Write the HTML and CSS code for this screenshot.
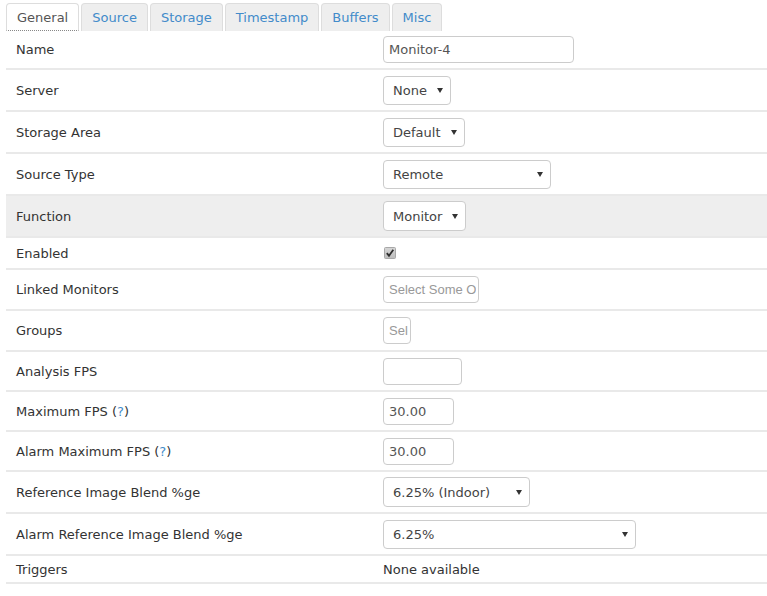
FILE: index.html
```html
<!DOCTYPE html>
<html>
<head>
<meta charset="utf-8">
<title>Monitor-4</title>
<link rel="stylesheet" href="styles.css">
</head>
<body>
<div class="page">
  <ul class="tabs">
    <li class="tab active">General</li>
    <li class="tab">Source</li>
    <li class="tab">Storage</li>
    <li class="tab">Timestamp</li>
    <li class="tab">Buffers</li>
    <li class="tab">Misc</li>
  </ul>
  <div class="form">
    <div class="row h39">
      <div class="label">Name</div>
      <div class="value"><input class="input w191" type="text" value="Monitor-4"></div>
    </div>
    <div class="row h42">
      <div class="label">Server</div>
      <div class="value"><div class="select w68"><span>None</span><svg class="arrow" width="6" height="5" viewBox="0 0 6 5"><path d="M0 0H6L3 5Z"/></svg></div></div>
    </div>
    <div class="row h42">
      <div class="label">Storage Area</div>
      <div class="value"><div class="select w82"><span>Default</span><svg class="arrow" width="6" height="5" viewBox="0 0 6 5"><path d="M0 0H6L3 5Z"/></svg></div></div>
    </div>
    <div class="row h42">
      <div class="label">Source Type</div>
      <div class="value"><div class="select w168"><span>Remote</span><svg class="arrow" width="6" height="5" viewBox="0 0 6 5"><path d="M0 0H6L3 5Z"/></svg></div></div>
    </div>
    <div class="row h42 highlight">
      <div class="label">Function</div>
      <div class="value"><div class="select w83 tall"><span>Monitor</span><svg class="arrow" width="6" height="5" viewBox="0 0 6 5"><path d="M0 0H6L3 5Z"/></svg></div></div>
    </div>
    <div class="row h32">
      <div class="label">Enabled</div>
      <div class="value">
        <svg class="check" width="12" height="12" viewBox="0 0 12 12">
          <defs><linearGradient id="cb" x1="0" y1="0" x2="0" y2="1"><stop offset="0" stop-color="#d6d6d6"/><stop offset="1" stop-color="#bdbdbd"/></linearGradient></defs>
          <rect x="0.5" y="0.5" width="11" height="11" rx="1" fill="url(#cb)" stroke="#a8a8a8"/>
          <path d="M2.8 6.2L5 8.7L9.3 2.8" fill="none" stroke="#2e2e2e" stroke-width="1.8"/>
        </svg>
      </div>
    </div>
    <div class="row h41">
      <div class="label">Linked Monitors</div>
      <div class="value"><div class="chosen w96"><span class="ph">Select Some Options</span></div></div>
    </div>
    <div class="row h41">
      <div class="label">Groups</div>
      <div class="value"><div class="chosen w28"><span class="ph">Select Some Options</span></div></div>
    </div>
    <div class="row h40">
      <div class="label">Analysis FPS</div>
      <div class="value"><input class="input w79" type="text" value=""></div>
    </div>
    <div class="row h40">
      <div class="label">Maximum FPS <span class="help">(<a>?</a>)</span></div>
      <div class="value"><input class="input w71" type="text" value="30.00"></div>
    </div>
    <div class="row h40">
      <div class="label">Alarm Maximum FPS <span class="help">(<a>?</a>)</span></div>
      <div class="value"><input class="input w71" type="text" value="30.00"></div>
    </div>
    <div class="row h42">
      <div class="label">Reference Image Blend %ge</div>
      <div class="value"><div class="select w147 tall"><span>6.25% (Indoor)</span><svg class="arrow" width="6" height="5" viewBox="0 0 6 5"><path d="M0 0H6L3 5Z"/></svg></div></div>
    </div>
    <div class="row h42">
      <div class="label">Alarm Reference Image Blend %ge</div>
      <div class="value"><div class="select w253"><span>6.25%</span><svg class="arrow" width="6" height="5" viewBox="0 0 6 5"><path d="M0 0H6L3 5Z"/></svg></div></div>
    </div>
    <div class="row h28">
      <div class="label">Triggers</div>
      <div class="value">None available</div>
    </div>
  </div>
</div>
</body>
</html>
```

FILE: styles.css
```css
html, body {
  margin: 0;
  padding: 0;
  background: #fff;
}
body {
  font-family: "DejaVu Sans", Verdana, sans-serif;
  font-size: 13px;
  color: #333;
}
.page {
  padding: 3px 0 0 6px;
}
.tabs {
  display: flex;
  gap: 2px;
  list-style: none;
  margin: 0;
  padding: 0;
}
.tab {
  box-sizing: border-box;
  height: 28px;
  display: flex;
  align-items: center;
  padding: 0 10px;
  border: 1px solid #ddd;
  border-bottom: none;
  border-radius: 4px 4px 0 0;
  background: #eee;
  color: #428bca;
}
.tab.active {
  background: #fff;
  color: #555;
  border-bottom: 1px dotted #888;
}
.form {
  display: flex;
  flex-direction: column;
}
.row {
  box-sizing: border-box;
  display: flex;
  align-items: center;
  border-bottom: 2px solid #e9e9e9;
}
.row.highlight {
  background: #eee;
}
.h28 { height: 28px; }
.h32 { height: 32px; }
.h39 { height: 39px; }
.h40 { height: 40px; }
.h41 { height: 41px; }
.h42 { height: 42px; }
.label {
  flex: none;
  box-sizing: border-box;
  width: 377px;
  padding-left: 10px;
}
.value {
  display: flex;
  align-items: center;
  color: #333;
}
.help a {
  color: #428bca;
}
.input {
  box-sizing: border-box;
  height: 27px;
  margin: 0;
  padding: 0 5px;
  border: 1px solid #ccc;
  border-radius: 4px;
  font-family: "DejaVu Sans", Verdana, sans-serif;
  font-size: 13px;
  color: #555;
  background: #fff;
  outline: none;
}
.select {
  box-sizing: border-box;
  height: 29px;
  display: flex;
  align-items: center;
  justify-content: space-between;
  padding: 0 7px 0 9px;
  border: 1px solid #ccc;
  border-radius: 4px;
  background: #fff;
  color: #444;
}
.select.tall {
  height: 30px;
}
.arrow {
  flex: none;
  fill: #333;
}
.chosen {
  box-sizing: border-box;
  height: 27px;
  display: flex;
  align-items: center;
  padding: 0 2px 0 5px;
  border: 1px solid #ccc;
  border-radius: 4px;
  background: #fff;
  font-family: "Liberation Sans", Arial, sans-serif;
  font-size: 13px;
  color: #999;
}
.ph {
  display: block;
  min-width: 0;
  flex: 1;
  white-space: nowrap;
  overflow: hidden;
}
.check {
  display: block;
  margin-left: 1px;
}
.w28 { width: 28px; }
.w68 { width: 68px; }
.w71 { width: 71px; }
.w79 { width: 79px; }
.w82 { width: 82px; }
.w83 { width: 83px; }
.w96 { width: 96px; }
.w147 { width: 147px; }
.w168 { width: 168px; }
.w191 { width: 191px; }
.w253 { width: 253px; }
```
